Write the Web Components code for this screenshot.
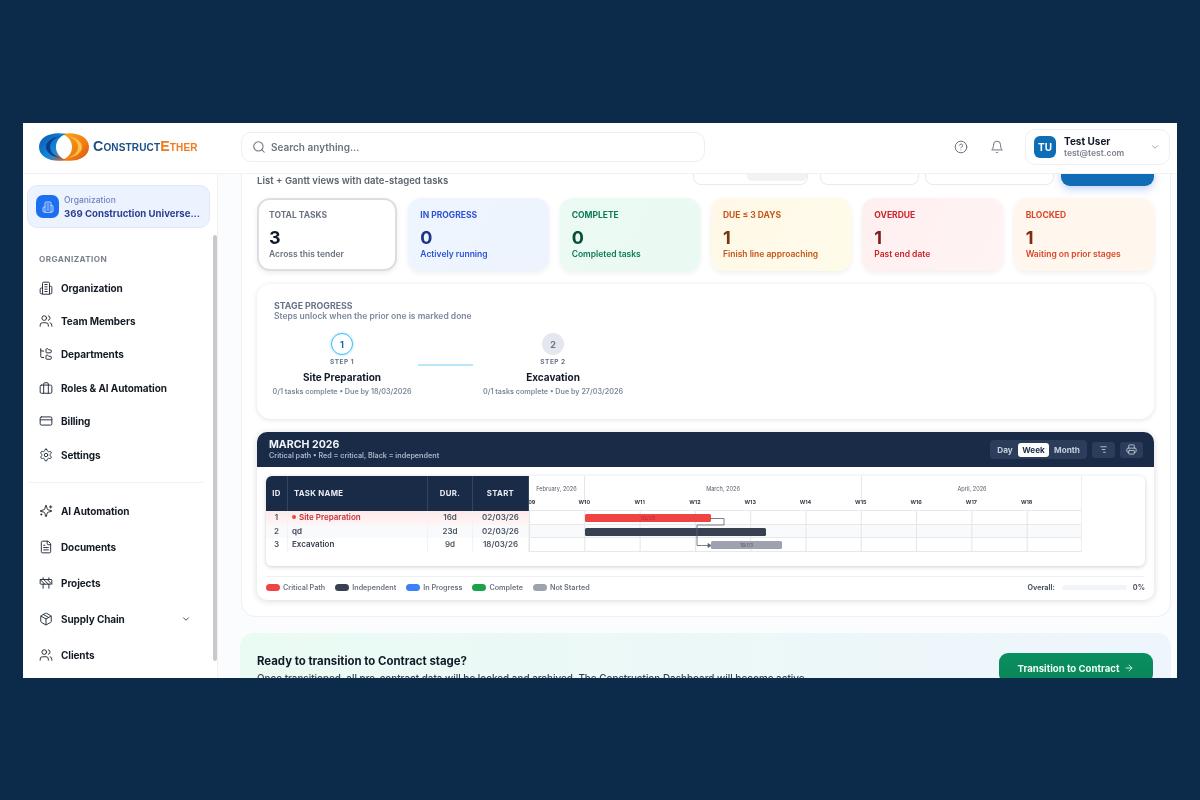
<!DOCTYPE html>
<html lang="en">
<head>
<meta charset="utf-8">
<title>ConstructEther - Tasks</title>
<style>
  html, body { margin: 0; height: 100%; }
  body { background: #0c2a49; font-family: Inter, "Liberation Sans", sans-serif; }
  app-shell { margin: 123px 23px 0; }
</style>
</head>
<body>
<app-shell>
  <app-header slot="header"></app-header>
  <app-sidebar slot="sidebar">
    <org-card name="369 Construction Universe..."></org-card>
    <nav-label>ORGANIZATION</nav-label>
    <nav-group step="33.4px">
      <nav-item icon="building">Organization</nav-item>
      <nav-item icon="users">Team Members</nav-item>
      <nav-item icon="tree">Departments</nav-item>
      <nav-item icon="briefcase">Roles &amp; AI Automation</nav-item>
      <nav-item icon="card">Billing</nav-item>
      <nav-item icon="gear">Settings</nav-item>
    </nav-group>
    <nav-divider></nav-divider>
    <nav-group step="36px">
      <nav-item icon="sparkles">AI Automation</nav-item>
      <nav-item icon="file">Documents</nav-item>
      <nav-item icon="barrier">Projects</nav-item>
      <nav-item icon="box" expandable>Supply Chain</nav-item>
      <nav-item icon="users">Clients</nav-item>
    </nav-group>
  </app-sidebar>
  <task-panel slot="main">
    <task-toolbar>List + Gantt views with date-staged tasks</task-toolbar>
    <stat-row>
      <stat-card tone="plain" label="TOTAL TASKS" value="3">Across this tender</stat-card>
      <stat-card tone="blue" label="IN PROGRESS" value="0">Actively running</stat-card>
      <stat-card tone="green" label="COMPLETE" value="0">Completed tasks</stat-card>
      <stat-card tone="amber" label="DUE ≤ 3 DAYS" value="1">Finish line approaching</stat-card>
      <stat-card tone="red" label="OVERDUE" value="1">Past end date</stat-card>
      <stat-card tone="orange" label="BLOCKED" value="1">Waiting on prior stages</stat-card>
    </stat-row>
    <stage-progress>
      <stage-step num="1" name="Site Preparation" active>0/1 tasks complete • Due by 18/03/2026</stage-step>
      <stage-link></stage-link>
      <stage-step num="2" name="Excavation">0/1 tasks complete • Due by 27/03/2026</stage-step>
    </stage-progress>
    <gantt-card></gantt-card>
  </task-panel>
  <transition-banner slot="main"></transition-banner>
</app-shell>

<script>
const ICONS = {
  building: '<path d="M6 22V4a2 2 0 0 1 2-2h8a2 2 0 0 1 2 2v18Z"/><path d="M6 12H4a2 2 0 0 0-2 2v6a2 2 0 0 0 2 2h2"/><path d="M18 9h2a2 2 0 0 1 2 2v9a2 2 0 0 1-2 2h-2"/><path d="M10 6h4M10 10h4M10 14h4M10 18h4"/>',
  users: '<path d="M16 21v-2a4 4 0 0 0-4-4H6a4 4 0 0 0-4 4v2"/><circle cx="9" cy="7" r="4"/><path d="M22 21v-2a4 4 0 0 0-3-3.87"/><path d="M16 3.13a4 4 0 0 1 0 7.75"/>',
  tree: '<path d="M20 10a1 1 0 0 0 1-1V6a1 1 0 0 0-1-1h-2.5a1 1 0 0 1-.8-.4l-.9-1.2A1 1 0 0 0 15 3h-2a1 1 0 0 0-1 1v5a1 1 0 0 0 1 1Z"/><path d="M20 21a1 1 0 0 0 1-1v-3a1 1 0 0 0-1-1h-2.9a1 1 0 0 1-.88-.55l-.42-.85a1 1 0 0 0-.92-.6H13a1 1 0 0 0-1 1v5a1 1 0 0 0 1 1Z"/><path d="M3 5a2 2 0 0 0 2 2h3"/><path d="M3 3v13a2 2 0 0 0 2 2h3"/>',
  briefcase: '<rect x="2" y="7" width="20" height="14" rx="2"/><path d="M16 21V5a2 2 0 0 0-2-2h-4a2 2 0 0 0-2 2v16"/>',
  card: '<rect x="2" y="5" width="20" height="14" rx="2"/><path d="M2 10h20"/>',
  gear: '<path d="M12.22 2h-.44a2 2 0 0 0-2 2v.18a2 2 0 0 1-1 1.73l-.43.25a2 2 0 0 1-2 0l-.15-.08a2 2 0 0 0-2.73.73l-.22.38a2 2 0 0 0 .73 2.73l.15.1a2 2 0 0 1 1 1.72v.51a2 2 0 0 1-1 1.74l-.15.09a2 2 0 0 0-.73 2.73l.22.38a2 2 0 0 0 2.73.73l.15-.08a2 2 0 0 1 2 0l.43.25a2 2 0 0 1 1 1.73V20a2 2 0 0 0 2 2h.44a2 2 0 0 0 2-2v-.18a2 2 0 0 1 1-1.73l.43-.25a2 2 0 0 1 2 0l.15.08a2 2 0 0 0 2.73-.73l.22-.39a2 2 0 0 0-.73-2.73l-.15-.08a2 2 0 0 1-1-1.74v-.5a2 2 0 0 1 1-1.74l.15-.09a2 2 0 0 0 .73-2.73l-.22-.38a2 2 0 0 0-2.73-.73l-.15.08a2 2 0 0 1-2 0l-.43-.25a2 2 0 0 1-1-1.73V4a2 2 0 0 0-2-2z"/><circle cx="12" cy="12" r="3"/>',
  sparkles: '<path d="M9.937 15.5A2 2 0 0 0 8.5 14.063l-6.135-1.582a.5.5 0 0 1 0-.962L8.5 9.936A2 2 0 0 0 9.937 8.5l1.582-6.135a.5.5 0 0 1 .963 0L14.063 8.5A2 2 0 0 0 15.5 9.937l6.135 1.581a.5.5 0 0 1 0 .964L15.5 14.063a2 2 0 0 0-1.437 1.437l-1.582 6.135a.5.5 0 0 1-.963 0z"/><path d="M20 3v4M22 5h-4M4 17v2M5 18H3"/>',
  file: '<path d="M15 2H6a2 2 0 0 0-2 2v16a2 2 0 0 0 2 2h12a2 2 0 0 0 2-2V7Z"/><path d="M14 2v4a2 2 0 0 0 2 2h4"/><path d="M10 9H8M16 13H8M16 17H8"/>',
  barrier: '<rect x="2" y="6" width="20" height="8" rx="1"/><path d="M17 14v7M7 14v7M17 3v3M7 3v3M10 14 2.3 6.3M14 6l7.7 7.7M8 6l8 8"/>',
  box: '<path d="M11 21.73a2 2 0 0 0 2 0l7-4A2 2 0 0 0 21 16V8a2 2 0 0 0-1-1.73l-7-4a2 2 0 0 0-2 0l-7 4A2 2 0 0 0 3 8v8a2 2 0 0 0 1 1.73z"/><path d="M12 22V12M3.29 7 12 12l8.71-5M7.5 4.27l9 5.15"/>',
  search: '<circle cx="11" cy="11" r="8"/><path d="m21 21-4.3-4.3"/>',
  help: '<circle cx="12" cy="12" r="10"/><path d="M9.09 9a3 3 0 0 1 5.83 1c0 2-3 3-3 3"/><path d="M12 17h.01"/>',
  bell: '<path d="M6 8a6 6 0 0 1 12 0c0 7 3 9 3 9H3s3-2 3-9"/><path d="M10.3 21a1.94 1.94 0 0 0 3.4 0"/>',
  chevron: '<path d="m6 9 6 6 6-6"/>',
  print: '<path d="M6 18H4a2 2 0 0 1-2-2v-5a2 2 0 0 1 2-2h16a2 2 0 0 1 2 2v5a2 2 0 0 1-2 2h-2"/><path d="M6 9V3a1 1 0 0 1 1-1h10a1 1 0 0 1 1 1v6"/><rect x="6" y="14" width="12" height="8" rx="1"/>',
  sort: '<path d="M6 6h12M9 12h6M12 18h4"/>',
  arrow: '<path d="M5 12h14"/><path d="m12 5 7 7-7 7"/>'
};

function icon(name, size, width = 2) {
  return `<svg width="${size}" height="${size}" viewBox="0 0 24 24" fill="none" stroke="currentColor" stroke-width="${width}" stroke-linecap="round" stroke-linejoin="round">${ICONS[name]}</svg>`;
}

class BaseElement extends HTMLElement {
  constructor() {
    super();
    this.attachShadow({ mode: 'open' });
  }
  connectedCallback() {
    this.shadowRoot.innerHTML = this.render();
  }
}

class AppShell extends BaseElement {
  render() {
    return `
      <style>
        :host { display: grid; grid-template-columns: 195px 1fr; grid-template-rows: 51px 504px; height: 555px; overflow: hidden; background: #fbfcfd; color: #111827; filter: blur(.4px); }
        .top { grid-column: 1 / 3; display: block; }
        main { overflow: hidden; padding: 0 6px 0 23px; }
      </style>
      <div class="top"><slot name="header"></slot></div>
      <slot name="sidebar"></slot>
      <main><slot name="main"></slot></main>
    `;
  }
}

class AppHeader extends BaseElement {
  render() {
    return `
      <style>
        :host { display: flex; align-items: center; height: 51px; box-sizing: border-box; padding: 0 7px 3px 16px; background: #fff; border-bottom: 1px solid #eff1f4; }
        .logo { display: flex; align-items: center; gap: 4px; width: 202px; flex: none; }
        .word { font: 700 14.2px/1 "Liberation Sans", sans-serif; font-variant: small-caps; color: #1d4f86; letter-spacing: .15px; }
        .word b { color: #f07c1e; font-weight: 700; }
        .search { display: flex; align-items: center; gap: 5px; flex: none; width: 464px; height: 30px; box-sizing: border-box; padding-left: 10px; border: 1px solid #eceef1; border-radius: 10px; color: #6b7280; font-size: 10px; font-weight: 600; }
        .tools { margin-left: auto; display: flex; align-items: center; gap: 22px; color: #6b7280; }
        .tools svg { display: block; }
        .user { display: flex; align-items: center; gap: 8px; width: 145px; height: 36px; box-sizing: border-box; padding: 0 9px 0 8px; margin-left: -1px; border: 1px solid #f0f1f4; border-radius: 10px; }
        .avatar { width: 22px; height: 22px; border-radius: 6px; background: #0f6db6; color: #fff; font-size: 10px; font-weight: 700; display: flex; align-items: center; justify-content: center; flex: none; }
        .name { font-size: 10px; font-weight: 700; color: #111827; line-height: 12px; }
        .mail { font-size: 8.5px; font-weight: 600; color: #7b8190; line-height: 12px; }
        .chev { margin-left: auto; color: #8b93a0; display: flex; }
      </style>
      <div class="logo">
        <svg width="50" height="30" viewBox="0 0 50 30">
          <defs>
            <linearGradient id="lb" x1="0" x2="1" y1="0" y2="1"><stop offset="0" stop-color="#0b55ad"/><stop offset=".6" stop-color="#1389dc"/><stop offset="1" stop-color="#e2611a"/></linearGradient>
            <linearGradient id="lo" x1="0" x2="1" y1="0" y2="1"><stop offset="0" stop-color="#f9a51b"/><stop offset=".6" stop-color="#f07d14"/><stop offset="1" stop-color="#d94f10"/></linearGradient>
          </defs>
          <path d="M23 2C36-1 50 4 50 15S36 31 23 28c6-2 10-7 10-13S29 4 23 2Z" fill="url(#lo)"/>
          <path d="M27 2C14-1 0 4 0 15s14 16 27 13c-6-2-10-7-10-13S21 4 27 2Z" fill="url(#lb)"/>
          <path d="M22 4C14 5 7 9 7 15s7 10 15 11c-7-2-11-6-11-11S15 6 22 4Z" fill="#0b3d8a"/>
          <path d="M28 4c8 1 15 5 15 11s-7 10-15 11c7-2 11-6 11-11S35 6 28 4Z" fill="#fbc24a"/>
        </svg>
        <span class="word">Construct<b>Ether</b></span>
      </div>
      <div class="search">${icon('search', 14, 1.8)}<span>Search anything...</span></div>
      <div class="tools">
        ${icon('help', 14, 1.7)}
        ${icon('bell', 14, 1.7)}
        <div class="user">
          <div class="avatar">TU</div>
          <div><div class="name">Test User</div><div class="mail">test@test.com</div></div>
          <span class="chev">${icon('chevron', 10, 2)}</span>
        </div>
      </div>
    `;
  }
}

class AppSidebar extends BaseElement {
  render() {
    return `
      <style>
        :host { display: block; position: relative; background: #fff; border-right: 1px solid #f0f1f3; padding: 11px 0 0 4px; overflow: hidden; }
        .thumb { position: absolute; left: 190px; top: 61px; width: 4px; height: 426px; border-radius: 2px; background: #c9c9cb; }
      </style>
      <slot></slot>
      <div class="thumb"></div>
    `;
  }
}

class OrgCard extends BaseElement {
  render() {
    return `
      <style>
        :host { display: flex; align-items: center; gap: 5px; width: 183px; height: 43px; box-sizing: border-box; padding-left: 8px; background: #edf3fe; border: 1px solid #dfe8fb; border-radius: 10px; }
        .ic { width: 23px; height: 23px; border-radius: 7px; background: #1d6ff2; color: #cfe0ff; display: flex; align-items: center; justify-content: center; flex: none; }
        .lab { font-size: 8.5px; font-weight: 500; color: #6d84c0; line-height: 13px; }
        .name { font-size: 9.6px; font-weight: 700; color: #2b3f94; line-height: 13px; white-space: nowrap; }
      </style>
      <div class="ic">${icon('building', 12, 1.8)}</div>
      <div><div class="lab">Organization</div><div class="name">${this.getAttribute('name')}</div></div>
    `;
  }
}

class NavLabel extends BaseElement {
  render() {
    return `
      <style>:host { display: block; margin: 26px 0 7px 12px; font-size: 8.2px; font-weight: 700; letter-spacing: .4px; line-height: 10px; color: #7c818a; }</style>
      <slot></slot>
    `;
  }
}

class NavGroup extends BaseElement {
  render() {
    return `
      <style>:host { display: block; --step: ${this.getAttribute('step')}; }</style>
      <slot></slot>
    `;
  }
}

class NavItem extends BaseElement {
  render() {
    const chev = this.hasAttribute('expandable') ? `<span class="chev">${icon('chevron', 10, 2)}</span>` : '';
    return `
      <style>
        :host { display: flex; align-items: center; gap: 8px; height: var(--step); padding-left: 12px; width: 152px; font-size: 10px; font-weight: 700; letter-spacing: -.1px; color: #151b26; white-space: nowrap; }
        svg { display: block; color: #2b3340; flex: none; }
        .chev { margin-left: auto; color: #4b5563; }
      </style>
      ${icon(this.getAttribute('icon'), 14, 1.7)}
      <slot></slot>
      ${chev}
    `;
  }
}

class NavDivider extends BaseElement {
  render() {
    return `<style>:host { display: block; width: 175px; height: 1px; margin: 11px 0 10px 1px; background: #f1f2f4; }</style>`;
  }
}

class TaskPanel extends BaseElement {
  render() {
    return `
      <style>
        :host { display: block; width: 930px; box-sizing: border-box; margin-top: -35px; padding: 0 16px 16px 15px; background: #fff; border: 1px solid #eef0f3; border-radius: 14px; }
      </style>
      <slot></slot>
    `;
  }
}

class TaskToolbar extends BaseElement {
  render() {
    return `
      <style>
        :host { display: flex; align-items: flex-end; height: 45px; font-size: 9.6px; font-weight: 600; color: #5d6470; }
        .txt { line-height: 11px; position: relative; top: .5px; }
        .btns { margin-left: auto; display: flex; gap: 6px; align-items: flex-end; }
        .b { display: block; height: 24px; box-sizing: border-box; border: 1px solid #e8eaee; border-top: 0; border-radius: 0 0 8px 8px; background: #fff; }
        .b1 { width: 115px; margin-right: 6px; position: relative; }
        .b1 i { position: absolute; right: 0; bottom: 3px; width: 60px; height: 8px; border-radius: 0 0 5px 5px; background: #f1f2f4; }
        .b2 { width: 99px; } .b3 { width: 129px; }
        .go { width: 93px; height: 24px; background: #0f6cb5; border-radius: 0 0 9px 9px; box-shadow: 0 3px 8px rgba(37,99,235,.3); margin-left: 1px; position: relative; top: 1px; }
      </style>
      <span class="txt"><slot></slot></span>
      <div class="btns"><span class="b b1"><i></i></span><span class="b b2"></span><span class="b b3"></span><span class="go"></span></div>
    `;
  }
}

class StatRow extends BaseElement {
  render() {
    return `
      <style>:host { display: grid; grid-template-columns: repeat(6, 1fr); gap: 11px; margin-top: 13px; }</style>
      <slot></slot>
    `;
  }
}

const TONES = {
  plain: { bg: '#fff', lab: '#6b7280', val: '#111827', sub: '#6b7280' },
  blue: { bg: 'linear-gradient(120deg,#eff5ff,#edf4fe)', lab: '#2d52d4', val: '#1e3485', sub: '#2d52d4' },
  green: { bg: 'linear-gradient(120deg,#ebfbf3,#eafaf3)', lab: '#0d7a58', val: '#064e3b', sub: '#0d7a58' },
  amber: { bg: 'linear-gradient(120deg,#fff8e8,#fffbe9)', lab: '#c2561a', val: '#78350f', sub: '#c2561a' },
  red: { bg: 'linear-gradient(120deg,#fff0f0,#fff3f3)', lab: '#cc2229', val: '#7f1d1d', sub: '#cc2229' },
  orange: { bg: 'linear-gradient(120deg,#fff6ed,#fff7ee)', lab: '#d9472b', val: '#7c2d12', sub: '#d9472b' }
};

class StatCard extends BaseElement {
  render() {
    const tone = this.getAttribute('tone');
    const c = TONES[tone];
    const edge = tone === 'plain'
      ? 'border: 2px solid #dcdee2; padding: 10px 10px 0 10px; box-shadow: 0 2px 5px rgba(0,0,0,.08);'
      : 'padding: 12px 12px 0 12px; box-shadow: 0 2px 5px rgba(15,23,42,.07);';
    return `
      <style>
        :host { display: block; height: 73px; box-sizing: border-box; border-radius: 13px; background: ${c.bg}; ${edge} }
        .lab { font-size: 8.5px; font-weight: 700; line-height: 11px; color: ${c.lab}; white-space: nowrap; }
        .val { font-size: 18px; font-weight: 700; line-height: 22px; margin-top: 6px; color: ${c.val}; }
        .sub { font-size: 8.5px; font-weight: 600; line-height: 11px; color: ${c.sub}; white-space: nowrap; }
      </style>
      <div class="lab">${this.getAttribute('label')}</div>
      <div class="val">${this.getAttribute('value')}</div>
      <div class="sub"><slot></slot></div>
    `;
  }
}

class StageProgress extends BaseElement {
  render() {
    return `
      <style>
        :host { display: block; height: 135px; box-sizing: border-box; margin-top: 13px; padding: 16px 17px; background: #fff; border-radius: 14px; box-shadow: 0 1px 5px rgba(15,23,42,.12); }
        .t { font-size: 8.8px; font-weight: 700; line-height: 11px; color: #66738a; }
        .s { font-size: 8.5px; font-weight: 600; line-height: 11px; color: #7d889d; }
        .steps { display: flex; margin-top: 11px; }
      </style>
      <div class="t">STAGE PROGRESS</div>
      <div class="s">Steps unlock when the prior one is marked done</div>
      <div class="steps"><slot></slot></div>
    `;
  }
}

class StageStep extends BaseElement {
  render() {
    const active = this.hasAttribute('active');
    return `
      <style>
        :host { display: flex; flex-direction: column; align-items: center; width: 136px; }
        .c { width: 22px; height: 22px; box-sizing: border-box; border-radius: 50%; display: flex; align-items: center; justify-content: center; font-size: 9px; font-weight: 700;
             ${active ? 'border: 1.5px solid #38bdf8; color: #0f6cb5; background: #fff; box-shadow: 0 0 0 1.5px #e0f5ff;' : 'background: #e4e8ee; color: #66738a;'} }
        .l { font-size: 6.5px; font-weight: 700; letter-spacing: .5px; line-height: 8px; margin-top: 3px; color: #66738a; }
        .n { font-size: 10px; font-weight: 700; line-height: 14px; margin-top: 4px; color: #111827; white-space: nowrap; }
        .d { font-size: 7.2px; font-weight: 600; line-height: 10px; margin-top: 3px; color: #7d889d; white-space: nowrap; }
      </style>
      <div class="c">${this.getAttribute('num')}</div>
      <div class="l">STEP ${this.getAttribute('num')}</div>
      <div class="n">${this.getAttribute('name')}</div>
      <div class="d"><slot></slot></div>
    `;
  }
}

class StageLink extends BaseElement {
  render() {
    return `<style>:host { display: block; flex: none; width: 55px; height: 2px; margin: 31px 12px 0 8px; background: #bae6fd; }</style>`;
  }
}

class GanttCard extends BaseElement {
  render() {
    return `
      <style>
        :host { display: block; height: 168px; margin-top: 13px; background: #fff; border-radius: 10px; box-shadow: 0 1px 6px rgba(15,23,42,.16); overflow: hidden; }
        .head { display: flex; align-items: center; height: 35px; box-sizing: border-box; padding: 0 11px 0 12px; background: #1a2b47; }
        .title { font-size: 10.6px; font-weight: 700; line-height: 13px; color: #f1f5f9; }
        .sub { font-size: 7.2px; font-weight: 600; line-height: 10px; color: #a8b6ca; }
        .ctl { margin-left: auto; display: flex; align-items: center; gap: 5px; }
        .seg { display: grid; grid-template-columns: 26px 31px 1fr; align-items: center; height: 19px; padding: 0 2px; box-sizing: border-box; width: 97px; border-radius: 4px; background: #2b3d5a; font-size: 8.2px; font-weight: 700; color: #c4cfdf; text-align: center; }
        .seg .on { height: 14px; line-height: 14px; border-radius: 3px; background: #fff; color: #1a2b47; }
        .btn { width: 23px; height: 16px; border-radius: 3px; background: #2b3d5a; color: #cbd5e1; display: flex; align-items: center; justify-content: center; }
        .btn svg { display: block; }
        .body { padding: 9px 9px 0; }
        .sheet { display: flex; height: 90px; box-sizing: border-box; border-radius: 6px; background: #fff; box-shadow: 0 1px 4px rgba(15,23,42,.2); overflow: hidden; }
        .tbl { width: 263px; flex: none; font-size: 8px; font-weight: 600; color: #4b5563; }
        .row { display: grid; grid-template-columns: 22px 140px 45px 56px; height: 13.67px; line-height: 13.67px; text-align: center; }
        .row > * { border-right: 1px solid #f1f3f6; }
        .row .nm { text-align: left; padding-left: 4px; color: #374151; white-space: nowrap; }
        .hr { height: 35px; line-height: 35px; background: #1a2b47; color: #e8edf4; font-size: 7.8px; font-weight: 700; letter-spacing: .3px; }
        .hr > * { border-right: 1px solid #33445f; }
        .hr .nm { color: #e8edf4; padding-left: 6px; }
        .r1 { background: linear-gradient(180deg,#fdeaea,#fff5f5); }
        .r1 .nm { color: #c62f37; }
        .r2 { background: #f9fafb; }
        .dot { display: inline-block; width: 4px; height: 4px; border-radius: 50%; background: #ef4444; margin: 0 3px 1px 0; }
        .tl { position: relative; width: 553px; flex: none; height: 76px; overflow: hidden; border-right: 1px solid #eceef1; box-sizing: border-box; }
        .months { display: grid; grid-template-columns: 55px 277px 221px; height: 20px; }
        .months div { border-left: 1px solid #e5e7eb; font-size: 5.6px; font-weight: 400; color: #555c68; text-align: center; line-height: 27px; }
        .months div:first-child { border-left: 0; }
        .weeks { display: flex; height: 15px; margin-left: -27.65px; }
        .weeks span { flex: none; width: 55.3px; text-align: center; font-size: 5.4px; font-weight: 700; color: #333a46; line-height: 12px; }
        .line { height: 13.67px; box-sizing: border-box; position: relative; border-bottom: 1px solid #e6e8ec; background-image: linear-gradient(to right, #e2e4e9 1px, transparent 1px); background-size: 55.3px 100%; }
        .hdline { height: 1px; margin-top: -1px; background: #e6e8ec; }
        .l2 { background-color: #f8fafc; }
        .bar { position: absolute; top: 3px; height: 8px; border-radius: 1.5px; font-size: 5px; line-height: 8px; text-align: center; }
        .links { position: absolute; left: 0; top: 0; }
        .legend { display: flex; align-items: center; height: 20px; margin: 10px 9px 0; border-top: 1px solid #eef0f3; font-size: 7.2px; font-weight: 600; color: #6b7280; }
        .k { display: flex; align-items: center; gap: 3px; margin-right: 10px; }
        .k i { width: 14px; height: 7px; border-radius: 4px; }
        .ov { margin-left: auto; display: flex; align-items: center; font-weight: 700; color: #4b5563; }
        .tr { width: 65px; height: 5px; border-radius: 3px; background: #f1f5f9; margin: 0 6px 0 7px; }
      </style>
      <div class="head">
        <div><div class="title">MARCH 2026</div><div class="sub">Critical path • Red = critical, Black = independent</div></div>
        <div class="ctl">
          <div class="seg"><span>Day</span><span class="on">Week</span><span>Month</span></div>
          <div class="btn">${icon('sort', 11, 1.8)}</div>
          <div class="btn">${icon('print', 11, 1.8)}</div>
        </div>
      </div>
      <div class="body">
        <div class="sheet">
          <div class="tbl">
            <div class="row hr"><span>ID</span><span class="nm">TASK NAME</span><span>DUR.</span><span>START</span></div>
            <div class="row r1"><span>1</span><span class="nm"><i class="dot"></i>Site Preparation</span><span>16d</span><span>02/03/26</span></div>
            <div class="row r2"><span>2</span><span class="nm">qd</span><span>23d</span><span>02/03/26</span></div>
            <div class="row"><span>3</span><span class="nm">Excavation</span><span>9d</span><span>18/03/26</span></div>
          </div>
          <div class="tl">
            <div class="months"><div>February, 2026</div><div>March, 2026</div><div>April, 2026</div></div>
            <div class="weeks"><span>W09</span><span>W10</span><span>W11</span><span>W12</span><span>W13</span><span>W14</span><span>W15</span><span>W16</span><span>W17</span><span>W18</span></div>
            <div class="hdline"></div>
            <div class="line"><div class="bar" style="left:56px;width:126px;background:#ef4444;color:#b3272c">02/03</div></div>
            <div class="line l2"><div class="bar" style="left:56px;width:181px;background:#374151"></div></div>
            <div class="line"><div class="bar" style="left:182px;width:71px;background:#9ca3af;color:#5b616c">18/03</div></div>
            <svg class="links" width="553" height="76" fill="none" stroke="#5b6270" stroke-width=".8">
              <path d="M182 42.5H195V49H168V69.5H179"/>
              <path d="M179 67.5 182 69.5 179 71.5Z" fill="#5b6270"/>
            </svg>
          </div>
        </div>
      </div>
      <div class="legend">
        <span class="k"><i style="background:#ef4444"></i>Critical Path</span>
        <span class="k"><i style="background:#374151"></i>Independent</span>
        <span class="k"><i style="background:#3b82f6"></i>In Progress</span>
        <span class="k"><i style="background:#16a34a"></i>Complete</span>
        <span class="k"><i style="background:#9ca3af"></i>Not Started</span>
        <span class="ov">Overall:<span class="tr"></span>0%</span>
      </div>
    `;
  }
}

class TransitionBanner extends BaseElement {
  render() {
    return `
      <style>
        :host { display: flex; justify-content: space-between; width: 931px; height: 90px; box-sizing: border-box; margin: 16px 0 0 -1px; padding: 20px 18px 0 17px; border-radius: 14px; background: linear-gradient(90deg,#eafbf3,#eef5fd); }
        .t { font-size: 11.4px; font-weight: 700; line-height: 14px; margin-top: 1px; color: #111827; white-space: nowrap; }
        .s { font-size: 9.9px; font-weight: 500; line-height: 12px; margin-top: 4px; color: #374151; white-space: nowrap; }
        .b { display: flex; align-items: center; justify-content: center; gap: 5px; width: 154px; height: 30px; border-radius: 9px; background: linear-gradient(180deg,#0b8f60,#0a8558); color: #eafff5; font-size: 9.6px; font-weight: 700; }
        .b svg { display: block; }
      </style>
      <div><div class="t">Ready to transition to Contract stage?</div><div class="s">Once transitioned, all pre-contract data will be locked and archived. The Construction Dashboard will become active.</div></div>
      <div class="b">Transition to Contract ${icon('arrow', 10, 2)}</div>
    `;
  }
}

customElements.define('app-shell', AppShell);
customElements.define('app-header', AppHeader);
customElements.define('app-sidebar', AppSidebar);
customElements.define('org-card', OrgCard);
customElements.define('nav-label', NavLabel);
customElements.define('nav-group', NavGroup);
customElements.define('nav-item', NavItem);
customElements.define('nav-divider', NavDivider);
customElements.define('task-panel', TaskPanel);
customElements.define('task-toolbar', TaskToolbar);
customElements.define('stat-row', StatRow);
customElements.define('stat-card', StatCard);
customElements.define('stage-progress', StageProgress);
customElements.define('stage-step', StageStep);
customElements.define('stage-link', StageLink);
customElements.define('gantt-card', GanttCard);
customElements.define('transition-banner', TransitionBanner);
</script>
</body>
</html>
